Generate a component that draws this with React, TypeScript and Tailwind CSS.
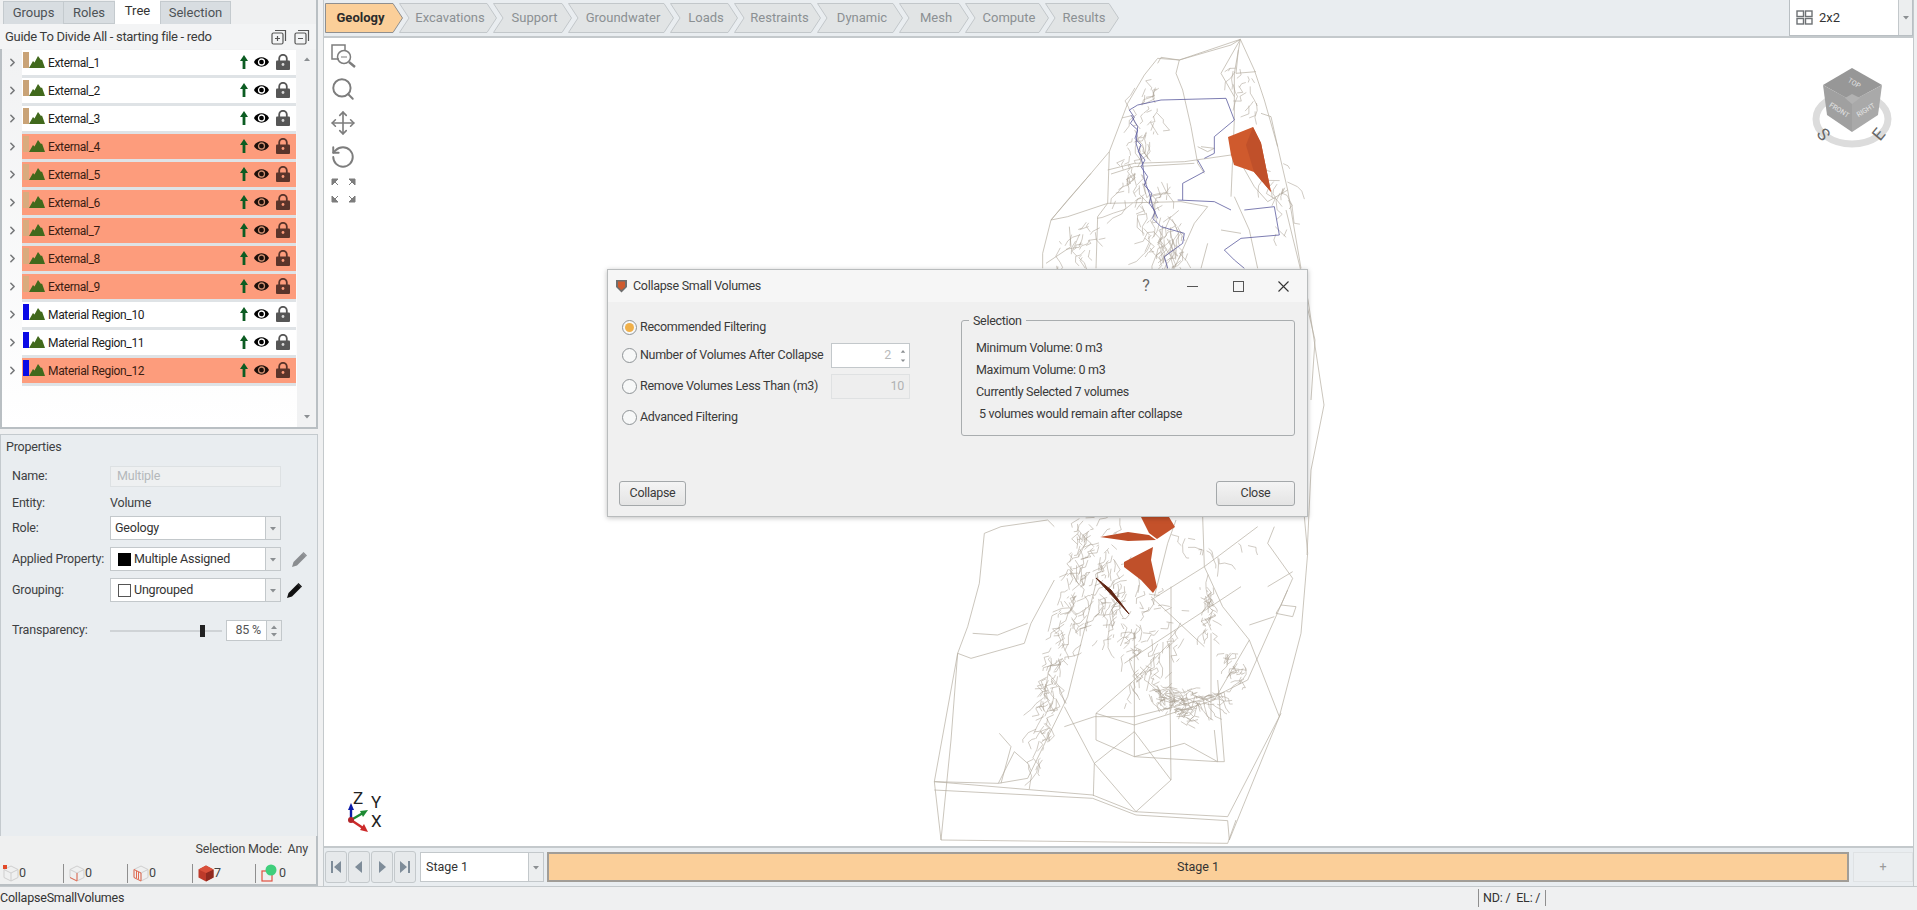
import { Move, RotateCcw, Search, ChevronRight } from "lucide-react";

const font = "font-['Roboto',_sans-serif]";

function CaretDown({ className = "" }: { className?: string }) {
  return (
    <svg className={className} width="8" height="5" viewBox="0 0 8 5">
      <path d="M1 1h6L4 4.5z" fill="#8b8f92" />
    </svg>
  );
}

function Mountain() {
  return (
    <svg width="16" height="12" viewBox="0 0 16 12" className="shrink-0">
      <path d="M0 12 L4 5 L5.5 6.5 L9 0 L12 4 L13 3.5 L16 12 Z" fill="#41691c" />
    </svg>
  );
}

function UpArrow() {
  return (
    <svg width="8" height="14" viewBox="0 0 8 14">
      <path d="M4 0 L8 6 H5.4 V14 H2.6 V6 H0 Z" fill="#0c5c22" />
    </svg>
  );
}

function Eye({ dim }: { dim?: boolean }) {
  return (
    <svg width="15" height="10" viewBox="0 0 15 10">
      <path d="M0 5 C3 -1.2 12 -1.2 15 5 C12 11.2 3 11.2 0 5 Z" fill={dim ? "#1c0f0a" : "#000"} />
      <circle cx="7.5" cy="5" r="3" fill="none" stroke={dim ? "#c98a6c" : "#fff"} strokeWidth="1.3" />
    </svg>
  );
}

function Lock({ selected }: { selected?: boolean }) {
  const c = selected ? "#5a342a" : "#565656";
  return (
    <svg width="14" height="16" viewBox="0 0 14 16">
      <path d="M3.2 7V4.6a3.8 3.8 0 0 1 7.6 0V7" fill="none" stroke={c} strokeWidth="1.8" />
      <rect x="0" y="6.5" width="14" height="9.5" rx="1" fill={c} />
      <circle cx="7" cy="10.5" r="1.4" fill={selected ? "#fd9c7c" : "#d8d8d8"} />
    </svg>
  );
}

const rows = [
  { name: "External_1", color: "tan", selected: false },
  { name: "External_2", color: "tan", selected: false },
  { name: "External_3", color: "tan", selected: false },
  { name: "External_4", color: "tan", selected: true },
  { name: "External_5", color: "tan", selected: true },
  { name: "External_6", color: "tan", selected: true },
  { name: "External_7", color: "tan", selected: true },
  { name: "External_8", color: "tan", selected: true },
  { name: "External_9", color: "tan", selected: true },
  { name: "Material Region_10", color: "blue", selected: false },
  { name: "Material Region_11", color: "blue", selected: false },
  { name: "Material Region_12", color: "blue", selected: true },
];

function TreeRow({ name, color, selected }: { name: string; color: string; selected: boolean }) {
  return (
    <div className="flex h-[28px] items-start">
      <div className="flex h-[25px] w-[20px] items-center justify-center pl-[1px]">
        <ChevronRight className="h-[13px] w-[13px] text-[#77797b]" strokeWidth={3} />
      </div>
      <div
        className={`flex h-[28px] w-[274px] items-start border-b-[3px] border-[#dfe3e6] pl-[1px] ${selected ? "bg-[#fd9c7c] text-[#3b1d12]" : "bg-white text-[#1d1d1d]"}`}
      >
        <div
          className={`mt-[2px] h-[16px] w-[6px] ${color === "blue" ? "bg-[#0a0ae6]" : selected ? "bg-[#d9ab7e]" : "bg-[#c9a377]"}`}
        />
        <div className="mt-[6px]">
          <Mountain />
        </div>
        <span className="ml-[3px] mt-[3px] flex-1 whitespace-nowrap text-[12px] leading-[20px] tracking-[-0.35px]">{name}</span>
        <div className="mr-[6px] mt-[5px] flex items-start">
          <UpArrow />
          <div className="ml-[6px] mt-[2px]">
            <Eye dim={selected} />
          </div>
          <div className="ml-[7px] -mt-[1px]">
            <Lock selected={selected} />
          </div>
        </div>
      </div>
    </div>
  );
}

function LeftTabs() {
  return (
    <div className="flex h-[24px] items-end pl-[3px] text-[13px] text-[#4d5256]">
      <div className="flex h-[23px] w-[61px] items-center justify-center border border-b-0 border-[#c4cace] bg-[#d8dde1]">Groups</div>
      <div className="flex h-[23px] w-[51px] items-center justify-center border-y border-r border-[#c4cace] bg-[#d8dde1]">Roles</div>
      <div className="flex h-[24px] w-[45px] items-center justify-center bg-white pb-[3px] text-[#333]">Tree</div>
      <div className="flex h-[23px] w-[71px] items-center justify-center border border-b-0 border-[#c4cace] bg-[#d8dde1]">Selection</div>
    </div>
  );
}

function TreePanel() {
  return (
    <div className="flex h-[429px] w-[318px] flex-col border-b-2 border-r-2 border-[#b9bfc3]">
      <LeftTabs />
      <div className="flex h-[25px] items-center justify-between bg-[#f3f4f5] pl-[5px] pr-[6px] text-[13px] tracking-[-0.3px] text-[#3b3b3b]">
        <span>Guide To Divide All - starting file - redo</span>
        <div className="flex gap-[7px]">
          <svg width="16" height="16" viewBox="0 0 16 16" fill="none" stroke="#555" strokeWidth="1.2">
            <rect x="1" y="4" width="11" height="11" rx="1.5" />
            <path d="M4 1.5h10.5V12M4 9.5h5M6.5 7v5" />
          </svg>
          <svg width="16" height="16" viewBox="0 0 16 16" fill="none" stroke="#555" strokeWidth="1.2">
            <rect x="1" y="4" width="11" height="11" rx="1.5" />
            <path d="M4 1.5h10.5V12M4 9.5h5" />
          </svg>
        </div>
      </div>
      <div className="flex min-h-0 flex-1 border-l-2 border-[#b9bfc3] bg-white">
        <div className="flex flex-1 flex-col bg-[linear-gradient(#f1f2f3,#ffffff)] pt-[1px]">
          {rows.map((r) => (
            <TreeRow key={r.name} {...r} />
          ))}
        </div>
        <div className="flex w-[19px] flex-col items-center justify-between bg-[#f1f2f3] py-[8px]">
          <CaretDown className="rotate-180" />
          <CaretDown />
        </div>
      </div>
    </div>
  );
}

function Select({ children }: { children: React.ReactNode }) {
  return (
    <div className="flex h-[24px] w-[171px] items-center border border-[#c3c8cb] bg-white text-[#333]">
      <div className="flex flex-1 items-center whitespace-nowrap pl-[4px]">{children}</div>
      <div className="flex h-full w-[15px] items-center justify-center border-l border-[#c3c8cb] bg-[#eceeef]">
        <CaretDown />
      </div>
    </div>
  );
}

function Pencil({ color }: { color: string }) {
  return (
    <svg width="15" height="15" viewBox="0 0 15 15">
      <path d="M0 15 L1.5 10 L10.5 1 L14 4.5 L5 13.5 Z" fill={color} />
      <path d="M11.5 0 L15 3.5 L14 4.5 L10.5 1 Z" fill={color} />
    </svg>
  );
}

function PropertiesPanel() {
  return (
    <div className="flex h-[402px] w-[318px] flex-col border border-b-0 border-[#c4cace] bg-[#e9edf0] text-[12.5px] tracking-[-0.2px] text-[#3d4042]">
      <div className="ml-[5px] mt-[2px] h-[29px] leading-[20px]">Properties</div>
      <div className="flex items-center pl-[11px]">
        <span className="w-[98px] whitespace-nowrap">Name:</span>
        <div className="flex h-[21px] w-[171px] items-center border border-[#dde1e3] bg-[#eef0f1] pl-[6px] text-[#b4b8bb]">Multiple</div>
      </div>
      <div className="mt-[6px] flex h-[20px] items-center pl-[11px]">
        <span className="w-[98px]">Entity:</span>
        <span>Volume</span>
      </div>
      <div className="mt-[3px] flex items-center pl-[11px]">
        <span className="w-[98px]">Role:</span>
        <Select>Geology</Select>
      </div>
      <div className="mt-[7px] flex items-center pl-[11px]">
        <span className="w-[98px] whitespace-nowrap">Applied Property:</span>
        <Select>
          <span className="ml-[3px] mr-[3px] h-[13px] w-[13px] bg-black" />
          Multiple Assigned
        </Select>
        <div className="ml-[11px]">
          <Pencil color="#8a8d90" />
        </div>
      </div>
      <div className="mt-[7px] flex items-center pl-[11px]">
        <span className="w-[98px]">Grouping:</span>
        <Select>
          <span className="ml-[3px] mr-[3px] h-[13px] w-[13px] border border-[#555] bg-white" />
          Ungrouped
        </Select>
        <div className="ml-[6px]">
          <Pencil color="#111" />
        </div>
      </div>
      <div className="mt-[18px] flex items-center pl-[11px]">
        <span className="w-[98px]">Transparency:</span>
        <div className="relative flex h-[20px] w-[112px] items-center">
          <div className="h-[2px] w-full bg-[#cfd3d6]" />
          <div className="absolute left-[90px] top-[4px] h-[12px] w-[5px] bg-[#222]" />
        </div>
        <div className="ml-[4px] flex h-[21px] w-[56px] items-center border border-[#c3c8cb] bg-white">
          <span className="flex-1 pr-[5px] text-right text-[#555]">85 %</span>
          <div className="flex h-full w-[15px] flex-col items-center justify-center gap-[2px] border-l border-[#c3c8cb] bg-[#eceeef]">
            <CaretDown className="rotate-180" />
            <CaretDown />
          </div>
        </div>
      </div>
    </div>
  );
}

function CubeIcon({ children }: { children?: React.ReactNode }) {
  return (
    <svg width="16" height="17" viewBox="0 0 16 17" fill="none" className="shrink-0">
      <path d="M8 1 L15 4.5 V12.5 L8 16 L1 12.5 V4.5 Z M1 4.5 L8 8 L15 4.5 M8 8 V16" stroke="#cfcfcf" />
      {children}
    </svg>
  );
}

function SelectionStats() {
  return (
    <div className="flex h-[50px] w-[318px] flex-col border-b-2 border-r-2 border-[#b9bfc3] bg-[#eff0f0] text-[12.5px] tracking-[-0.2px] text-[#444]">
      <div className="mr-[8px] mt-[4px] h-[20px] text-right">Selection Mode:&nbsp; Any</div>
      <div className="mt-[4px] flex items-center pl-[3px]">
        <div className="flex w-[60px] items-center">
          <CubeIcon>
            <rect x="0" y="0" width="4" height="4" fill="#e24a2a" />
          </CubeIcon>
          <span>0</span>
        </div>
        <div className="flex w-[64px] items-center border-l border-[#8f8f8f] pl-[5px]">
          <CubeIcon>
            <path d="M8 8 V16 M1 12.5 L8 16" stroke="#e46a50" />
          </CubeIcon>
          <span>0</span>
        </div>
        <div className="flex w-[65px] items-center border-l border-[#8f8f8f] pl-[5px]">
          <CubeIcon>
            <path d="M1 4.5 L8 8 V16 L1 12.5 Z M3.5 6 V13 M5.5 7 V14" stroke="#e46a50" />
          </CubeIcon>
          <span>0</span>
        </div>
        <div className="flex w-[63px] items-center border-l border-[#8f8f8f] pl-[5px]">
          <svg width="16" height="17" viewBox="0 0 16 17" className="shrink-0">
            <path d="M8 0.5 L15.5 4.5 V12.5 L8 16.5 L0.5 12.5 V4.5 Z" fill="#bd3a2a" />
            <path d="M8 8 L15.5 4.5 V12.5 L8 16.5 Z" fill="#8f2a20" />
            <path d="M8 8 L0.5 4.5 L8 0.5 L15.5 4.5 Z" fill="#d9503a" />
          </svg>
          <span>7</span>
        </div>
        <div className="flex items-center border-l border-[#8f8f8f] pl-[5px]">
          <svg width="18" height="18" viewBox="0 0 18 18" fill="none" className="shrink-0">
            <rect x="1" y="7" width="10" height="10" stroke="#e05040" strokeWidth="1.2" />
            <circle cx="10" cy="6" r="5.5" fill="#3fcf7c" />
          </svg>
          <span>0</span>
        </div>
      </div>
    </div>
  );
}

const stages = [
  { label: "Excavations", w: "w-[98px]", n: 98 },
  { label: "Support", w: "w-[79px]", n: 79 },
  { label: "Groundwater", w: "w-[106px]", n: 106 },
  { label: "Loads", w: "w-[68px]", n: 68 },
  { label: "Restraints", w: "w-[87px]", n: 87 },
  { label: "Dynamic", w: "w-[86px]", n: 86 },
  { label: "Mesh", w: "w-[70px]", n: 70 },
  { label: "Compute", w: "w-[84px]", n: 84 },
  { label: "Results", w: "w-[74px]", n: 74 },
];

function StageChevron({ label, w, n }: { label: string; w: string; n: number }) {
  return (
    <div className={`relative -ml-[4px] flex h-[30px] items-center justify-center pl-[4px] text-[13px] text-[#8b9093] ${w}`}>
      <svg className="absolute inset-0 size-full" viewBox={`0 0 ${n} 30`}>
        <path
          d={`M0.5 0.5 H${n - 10} L${n - 0.5} 15 L${n - 10} 29.5 H0.5 L10 15 Z`}
          fill="#e1e4e5"
          stroke="#c2c7ca"
        />
      </svg>
      <span className="relative">{label}</span>
    </div>
  );
}

function TopBar() {
  return (
    <div className="flex h-[38px] items-start justify-between border-b-2 border-[#c4c9cc] bg-[#e9edf0]">
      <div className="ml-[1px] mt-[3px] flex">
        <div className="relative flex h-[30px] w-[78px] items-center justify-center pr-[7px] text-[13px] font-bold text-[#2b2b2b]">
          <svg className="absolute inset-0 size-full" viewBox="0 0 78 30">
            <path d="M0.5 0.5 H68 L77.5 15 L68 29.5 H0.5 Z" fill="#fbcf99" stroke="#8f8f8f" />
          </svg>
          <span className="relative">Geology</span>
        </div>
        {stages.map((s) => (
          <StageChevron key={s.label} {...s} />
        ))}
      </div>
      <div className="flex h-[36px] w-[124px] items-center border-x border-b border-[#b9bfc3] bg-white text-[13px] text-[#333]">
        <svg width="17" height="15" viewBox="0 0 17 15" fill="none" stroke="#6d7174" strokeWidth="1.4" className="ml-[6px]">
          <rect x="1" y="1" width="6.5" height="5.5" />
          <rect x="9.5" y="1" width="6.5" height="5.5" />
          <rect x="1" y="8.5" width="6.5" height="5.5" />
          <rect x="9.5" y="8.5" width="6.5" height="5.5" />
        </svg>
        <span className="ml-[6px] flex-1">2x2</span>
        <div className="flex h-full w-[14px] items-center justify-center border-l border-[#c3c8cb] bg-[#eceeef]">
          <CaretDown />
        </div>
      </div>
    </div>
  );
}

// deterministic scatter of short fracture strokes
function scatter(seed: number, segs: number[][]) {
  let s = seed;
  const rnd = () => {
    s = (s * 1664525 + 1013904223) % 4294967296;
    return s / 4294967296;
  };
  let d = "";
  for (const [x1, y1, x2, y2, spread, count, angle, len] of segs) {
    for (let i = 0; i < count; i++) {
      const t = rnd();
      let x = x1 + (x2 - x1) * t + (rnd() - 0.5) * spread;
      let y = y1 + (y2 - y1) * t + (rnd() - 0.5) * spread;
      d += `M${x.toFixed(1)} ${y.toFixed(1)}`;
      const hops = 1 + Math.floor(rnd() * 4);
      for (let h = 0; h < hops; h++) {
        const a = angle + (rnd() - 0.5) * 2.4;
        const l = len * (0.4 + rnd());
        x += Math.cos(a) * l;
        y += Math.sin(a) * l;
        d += `L${x.toFixed(1)} ${y.toFixed(1)}`;
      }
    }
  }
  return d;
}

const fractures = scatter(7, [
  [1150, 85, 1128, 190, 28, 55, 1.9, 7],
  [1150, 195, 1175, 265, 40, 80, 1.9, 9],
  [1095, 230, 1060, 262, 28, 24, 1.9, 7],
  [1235, 60, 1250, 110, 20, 16, 2.1, 7],
  [1270, 160, 1285, 240, 24, 16, 1.2, 8],
  [1085, 518, 1035, 765, 18, 130, 1.9, 7],
  [1100, 520, 1100, 640, 40, 60, 1.9, 6],
  [1110, 580, 1160, 640, 60, 70, 2.2, 6],
  [1130, 640, 1150, 690, 50, 34, 1.6, 6],
  [1150, 690, 1215, 700, 14, 60, 0.3, 6],
  [1160, 705, 1190, 720, 12, 30, -0.4, 6],
  [1205, 590, 1210, 640, 14, 30, 1.6, 5],
  [1225, 650, 1245, 680, 12, 26, 2.2, 5],
  [1180, 540, 1230, 560, 36, 12, 1, 6],
]);

const greyZ8 = [
  [470, 85, 535, 90, 718, 28, 760, 120, 790, 210, 830, 350, 860, 480, 900, 715],
  [470, 100, 480, 82, 535, 90, 690, 45, 718, 28],
  [470, 85, 430, 135, 380, 220, 325, 365, 270, 430, 150, 570, 125, 670, 125, 715],
  [718, 28, 700, 130, 700, 270, 690, 500],
  [712, 60, 705, 130, 765, 125],
  [718, 28, 660, 130, 700, 200],
  [535, 90, 525, 130, 545, 180, 570, 290, 590, 400, 610, 430],
  [325, 365, 320, 520, 290, 560, 285, 715],
  [320, 420, 400, 400, 550, 395, 690, 375],
  [330, 432, 400, 410, 580, 400],
  [150, 570, 200, 560, 320, 520, 540, 515],
  [205, 590, 210, 650, 135, 700],
  [700, 500, 745, 600, 770, 715],
  [660, 600, 720, 610],
  [860, 480, 800, 515, 760, 470, 720, 400],
  [780, 250, 810, 260, 830, 350],
  [540, 515, 620, 530, 580, 580, 520, 715],
  [270, 430, 200, 510, 150, 570],
  [600, 350, 640, 355, 620, 365, 590, 350],
  [600, 715, 620, 640],
];

const blueZ8 = [
  [385, 240, 410, 225, 480, 210, 675, 205, 700, 270, 640, 320, 640, 370, 610, 385],
  [385, 240, 400, 262, 388, 280, 410, 300, 402, 325, 420, 345, 412, 365, 432, 390, 420, 410, 440, 440, 430, 465, 452, 490, 445, 520, 462, 545, 455, 565, 480, 590, 550, 610, 545, 640, 490, 680, 500, 715],
  [390, 255, 410, 290, 405, 340, 425, 400, 430, 450, 445, 490, 455, 530, 470, 565],
  [530, 510, 640, 515, 690, 540],
  [545, 510, 545, 460, 610, 425, 590, 390],
  [730, 540, 820, 530, 835, 615, 720, 625, 670, 660, 700, 690, 730, 715],
];

const greyZ7 = [
  [190, 100, 175, 250, 140, 380, 110, 460, 40, 845, 60, 1020, 920, 1030, 945, 960],
  [110, 460, 90, 720, 60, 1020],
  [110, 460, 150, 475, 310, 430, 330, 370, 400, 240],
  [40, 845, 232, 850, 320, 835, 440, 590, 530, 230],
  [232, 850, 280, 755, 320, 790],
  [40, 870, 515, 895, 645, 945, 920, 962, 925, 1020],
  [40, 845, 515, 885, 640, 935, 920, 950, 1080, 640],
  [1150, 50, 1160, 160, 1140, 400, 1075, 650, 925, 1020],
  [1075, 650, 985, 420, 905, 320, 850, 200, 845, 50],
  [430, 620, 520, 790, 640, 695, 750, 840, 645, 935, 520, 790, 517, 888],
  [525, 640, 525, 720, 640, 770, 890, 785, 910, 785, 890, 540],
  [525, 640, 640, 540, 745, 430, 750, 840],
  [525, 640, 640, 675, 880, 600, 985, 420],
  [640, 400, 640, 770],
  [640, 770, 790, 730, 890, 785],
  [750, 260, 750, 620],
  [870, 400, 870, 660],
  [690, 300, 850, 200, 1010, 80],
  [610, 490, 960, 260],
  [690, 290, 850, 440],
  [430, 680, 520, 650, 640, 650, 880, 590, 980, 540, 1100, 270],
  [1065, 340, 1115, 350, 1125, 320, 1080, 315, 1065, 340],
  [1060, 350, 985, 375],
  [1080, 315, 1115, 235, 1040, 130, 1060, 80],
  [155, 400, 230, 405, 320, 370],
  [235, 700, 270, 740, 240, 850],
  [190, 100, 240, 80, 380, 60, 400, 80],
  [880, 690, 890, 785],
  [765, 60, 740, 130, 700, 290],
  [1040, 260, 1115, 215],
];

// right of the dialog, in page coordinates
const greyPage = [
  [1285, 210, 1307, 300, 1323, 405, 1310, 470, 1306, 555],
  [1300, 280, 1314, 340, 1310, 400],
];

function pts(list: number[], ox: number, oy: number, k: number) {
  const out: string[] = [];
  for (let i = 0; i < list.length; i += 2) out.push(`${ox + list[i] / k},${oy + list[i + 1] / k}`);
  return out.join(" ");
}

function Wireframe() {
  return (
    <svg className="absolute inset-0" width="1590" height="807" viewBox="323 38 1590 807">
      <g fill="none" stroke="#b5ada1" strokeWidth="0.7">
        {greyZ8.map((l, i) => (
          <polyline key={i} points={pts(l, 1000, 30, 3)} />
        ))}
        {greyZ7.map((l, i) => (
          <polyline key={i} points={pts(l, 920, 500, 3)} />
        ))}
        {greyPage.map((l, i) => (
          <polyline key={i} points={pts(l, 0, 0, 1)} />
        ))}
        <path d={fractures} stroke="#a89f92" strokeWidth="0.55" />
      </g>
      <g fill="none" stroke="#5c5c9e" strokeWidth="0.8">
        {blueZ8.map((l, i) => (
          <polyline key={i} points={pts(l, 1000, 30, 3)} />
        ))}
      </g>
      <path d="M1227 137 L1252 127 L1260 143 L1270 192 L1253 172 L1233 165 L1230 155 Z" fill="#cf5a2d" />
      <path d="M1252 127 L1260 143 L1270 192 L1253 172 L1245 145 Z" fill="#c0502a" />
      <path d="M1140 517 L1148 533 L1156 539 L1174 527 L1168 517 Z" fill="#c4512a" />
      <path d="M1099 537 L1127 532 L1148 535 L1155 540 L1127 541 Z" fill="#bd4d28" />
      <path d="M1123 562 L1152 547 L1150 560 L1156 587 L1152 593 L1140 580 L1123 567 Z" fill="#c0502a" />
      <path d="M1095 578 L1128 614 L1110 590 Z" fill="#5e2412" stroke="#5e2412" />
    </svg>
  );
}

function ViewIcons() {
  return (
    <div className="absolute left-[6px] top-[6px] flex flex-col items-center gap-[8px] text-[#7d7d7d]">
      <svg width="25" height="24" viewBox="0 0 25 24" fill="none" stroke="#7d7d7d" strokeWidth="1.5">
        <path d="M8 15 H1 V1 H14 V6" />
        <circle cx="13" cy="13" r="6.5" />
        <path d="M18 18 L24 23" strokeWidth="2.4" />
        <path d="M10 13h6" strokeWidth="1" />
      </svg>
      <Search className="h-[26px] w-[26px]" strokeWidth={1.8} />
      <Move className="h-[26px] w-[26px]" strokeWidth={1.5} />
      <RotateCcw className="h-[26px] w-[26px]" strokeWidth={1.8} />
      <svg width="25" height="25" viewBox="0 0 25 25" fill="#7d7d7d" stroke="#7d7d7d">
        <path d="M1 1 H7 L1 7 Z M7 7 L3 3" />
        <path d="M24 1 H18 L24 7 Z M18 7 L22 3" />
        <path d="M1 24 H7 L1 18 Z M7 18 L3 22" />
        <path d="M24 24 H18 L24 18 Z M18 18 L22 22" />
      </svg>
    </div>
  );
}

function ViewCube() {
  return (
    <svg className="absolute right-[15px] top-[27px]" width="90" height="84" viewBox="1809 64 90 84">
      <ellipse cx="1853" cy="118" rx="36" ry="25" fill="none" stroke="#dcdcdc" strokeWidth="7" />
      <path d="M1853 67 L1883 84 L1853 100 L1824 84 Z" fill="#979797" />
      <path d="M1824 84 L1853 100 L1853 131 L1828 114 Z" fill="#a0a0a0" />
      <path d="M1883 84 L1853 100 L1853 131 L1879 114 Z" fill="#a9a9a9" />
      <path d="M1846 97 L1853 93 L1861 97 L1853 103 Z" fill="#b2b2b2" />
      <g fill="#e4e4e4" fontSize="7" fontFamily="Roboto, sans-serif" textAnchor="middle">
        <text transform="translate(1854 84) rotate(32)">TOP</text>
        <text transform="translate(1839 111) rotate(32)">FRONT</text>
        <text transform="translate(1868 111) rotate(-32)">RIGHT</text>
      </g>
      <g fill="#666" fontSize="17" fontFamily="Roboto, sans-serif" textAnchor="middle">
        <text transform="translate(1820 137) rotate(50)">S</text>
        <text transform="translate(1884 137) rotate(-50)">E</text>
      </g>
    </svg>
  );
}

function Axes() {
  return (
    <div className="absolute left-[19px] top-[751px] h-[50px] w-[44px] text-[17px] leading-[18px] text-[#222]">
      <svg className="absolute inset-0" width="44" height="50" viewBox="0 0 44 50" fill="none">
        <path d="M8 31 V19" stroke="#0a1aa8" strokeWidth="2.4" />
        <path d="M8 14 L11 21 H5 Z" fill="#0a1aa8" />
        <path d="M8 31 L20 24" stroke="#1c8a33" strokeWidth="2.4" />
        <path d="M25 21 L20 28 L17 22 Z" fill="#1c8a33" />
        <path d="M8 31 L20 39" stroke="#cc2a2a" strokeWidth="2.4" />
        <path d="M25 43 L17 41 L21 35 Z" fill="#cc2a2a" />
        <circle cx="8" cy="31" r="3" fill="#b3262a" />
      </svg>
      <span className="absolute left-[10px] top-0">Z</span>
      <span className="absolute left-[28px] top-[4px]">Y</span>
      <span className="absolute left-[28px] top-[23px]">X</span>
    </div>
  );
}

function Radio({ label, checked }: { label: string; checked?: boolean }) {
  return (
    <div className="flex h-[18px] items-center">
      <div className="flex h-[15px] w-[15px] shrink-0 items-center justify-center rounded-full border border-[#8e9396] bg-[#f7f8f8]">
        {checked && <div className="h-[9px] w-[9px] rounded-full bg-[#f0b04a]" />}
      </div>
      <span className="ml-[3px] whitespace-nowrap">{label}</span>
    </div>
  );
}

function Dialog() {
  return (
    <div className="absolute left-[283px] top-[231px] flex h-[248px] w-[701px] flex-col border border-[#b9bcbd] bg-[#f0f0f0] text-[12.5px] tracking-[-0.3px] text-[#3a3a3a] shadow-[0_1px_5px_rgba(0,0,0,0.25)]">
      <div className="flex h-[32px] items-center bg-[#f6f6f6] pl-[7px]">
        <svg width="13" height="14" viewBox="0 0 13 14" className="shrink-0">
          <path d="M1 1 H12 V8 L6.5 13.5 L1 8 Z" fill="#6e6e6e" />
          <path d="M3 2.5 H10 V8 L6.5 11 L3 8 Z" fill="#cf5a2d" />
        </svg>
        <span className="ml-[5px] flex-1">Collapse Small Volumes</span>
        <span className="w-[46px] text-center text-[16px] text-[#666]">?</span>
        <div className="flex w-[46px] justify-center">
          <div className="h-px w-[11px] bg-[#555]" />
        </div>
        <div className="flex w-[46px] justify-center">
          <div className="h-[11px] w-[11px] border border-[#555]" />
        </div>
        <div className="flex w-[46px] justify-center pr-[1px]">
          <svg width="11" height="11" viewBox="0 0 11 11" stroke="#333" strokeWidth="1.1">
            <path d="M0.5 0.5 L10.5 10.5 M10.5 0.5 L0.5 10.5" />
          </svg>
        </div>
      </div>
      <div className="flex flex-1 pl-[14px] pr-[12px]">
        <div className="flex w-[339px] flex-col pt-[16px]">
          <Radio label="Recommended Filtering" checked />
          <div className="mt-[7px] flex h-[25px] items-center">
            <div className="w-[209px]">
              <Radio label="Number of Volumes After Collapse" />
            </div>
            <div className="flex h-[25px] w-[79px] items-center border border-[#c3c8cb] bg-white text-[#b8babb]">
              <span className="flex-1 pr-[8px] text-right">2</span>
              <div className="flex w-[10px] flex-col gap-[4px]">
                <CaretDown className="rotate-180 scale-75" />
                <CaretDown className="scale-75" />
              </div>
            </div>
          </div>
          <div className="mt-[6px] flex h-[25px] items-center">
            <div className="w-[209px]">
              <Radio label="Remove Volumes Less Than (m3)" />
            </div>
            <div className="flex h-[25px] w-[79px] items-center justify-end border border-[#dfe1e2] bg-[#eeeeee] pr-[5px] text-[#b0b2b3]">10</div>
          </div>
          <div className="mt-[9px]">
            <Radio label="Advanced Filtering" />
          </div>
        </div>
        <div className="relative mt-[18px] h-[116px] w-[334px] rounded-[3px] border border-[#a9adaf] pl-[14px] pt-[17px]">
          <span className="absolute -top-[9px] left-[7px] bg-[#f0f0f0] px-[4px] leading-[18px]">Selection</span>
          <div className="flex flex-col gap-[2px] leading-[20px]">
            <span>Minimum Volume: 0 m3</span>
            <span>Maximum Volume: 0 m3</span>
            <span>Currently Selected 7 volumes</span>
            <span className="pl-[3px]">5 volumes would remain after collapse</span>
          </div>
        </div>
      </div>
      <div className="mb-[10px] flex justify-between pl-[11px] pr-[12px]">
        <div className="flex h-[25px] w-[67px] items-center justify-center rounded-[3px] border border-[#a4a8aa] bg-[linear-gradient(#f4f4f4,#e4e4e4)]">Collapse</div>
        <div className="flex h-[25px] w-[79px] items-center justify-center rounded-[3px] border border-[#a4a8aa] bg-[linear-gradient(#f4f4f4,#e4e4e4)]">Close</div>
      </div>
    </div>
  );
}

function NavButton({ d }: { d: string }) {
  return (
    <div className="flex h-[32px] w-[22px] items-center justify-center rounded-[3px] border border-[#c4c9cc] bg-[#e6e9eb]">
      <svg width="12" height="14" viewBox="0 0 12 14">
        <path d={d} fill="#7e8c99" />
      </svg>
    </div>
  );
}

function StageBar() {
  return (
    <div className="flex h-[40px] items-center border-t-2 border-[#c4c9cc] bg-[#e9edf0] pl-[1px]">
      <div className="flex gap-[1px]">
        <NavButton d="M1 1h2v12H1z M11 1v12L4 7z" />
        <NavButton d="M9 1v12L2 7z" />
        <NavButton d="M3 1v12l7-6z" />
        <NavButton d="M9 1h2v12H9z M1 1v12l7-6z" />
      </div>
      <div className="ml-[4px] flex h-[30px] w-[124px] items-center border border-[#c3c8cb] bg-white text-[12.5px] text-[#333]">
        <span className="flex-1 pl-[5px]">Stage 1</span>
        <div className="flex h-full w-[15px] items-center justify-center border-l border-[#c3c8cb] bg-[#eceeef]">
          <CaretDown />
        </div>
      </div>
      <div className="ml-[3px] flex h-[30px] w-[1302px] items-center justify-center border-2 border-[#a19d97] bg-[#fbcf99] text-[12.5px] text-[#333]">Stage 1</div>
      <div className="ml-[4px] flex h-[30px] w-[60px] items-center justify-center border border-[#dfe2e4] bg-[#ebeef0] text-[12.5px] text-[#9a9a9a]">+</div>
    </div>
  );
}

export default function App() {
  return (
    <div className={`flex h-[910px] w-[1917px] flex-col overflow-hidden bg-[#eff0f1] ${font}`}>
      <div className="flex h-[886px]">
        <div className="flex w-[323px] flex-col">
          <TreePanel />
          <div className="h-[5px]" />
          <PropertiesPanel />
          <SelectionStats />
        </div>
        <div className="flex w-[1591px] flex-col border-x border-[#c4c9cc]">
          <TopBar />
          <div className="relative min-h-0 flex-1 bg-white">
            <Wireframe />
            <ViewIcons />
            <ViewCube />
            <Axes />
            <Dialog />
          </div>
          <StageBar />
        </div>
      </div>
      <div className="flex h-[23px] items-center border-t border-[#c4c9cc] text-[12.5px] tracking-[-0.2px] text-[#333]">
        <span className="w-[1478px]">CollapseSmallVolumes</span>
        <span className="w-[67px] whitespace-nowrap border-l border-[#8f8f8f] pl-[4px]">ND: /&nbsp; EL: /</span>
        <span className="h-[16px] border-l border-[#8f8f8f]" />
      </div>
    </div>
  );
}
